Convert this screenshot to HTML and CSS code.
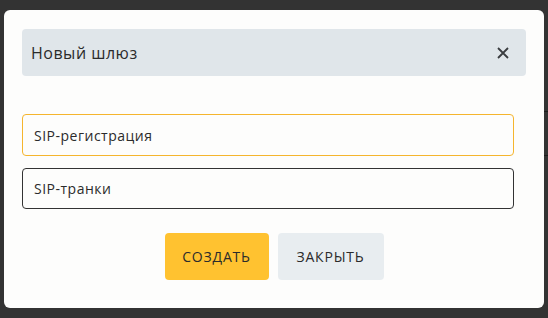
FILE: index.html
```html
<!DOCTYPE html>
<html lang="ru">
<head>
<meta charset="utf-8">
<link rel="stylesheet" href="styles.css">
</head>
<body>
<div class="modal">
  <div class="modal-header">
    <span class="title">Новый шлюз</span>
    <button class="close" aria-label="Закрыть">
      <svg width="12" height="12" viewBox="0 0 12 12"><path d="M1 1L11 11M11 1L1 11" stroke="#3a3d40" stroke-width="1.8" stroke-linecap="butt"/></svg>
    </button>
  </div>
  <div class="fields">
    <div class="field field-active">SIP-регистрация</div>
    <div class="field">SIP-транки</div>
  </div>
  <div class="actions">
    <button class="btn btn-primary">Создать</button>
    <button class="btn btn-secondary">Закрыть</button>
  </div>
</div>
</body>
</html>
```
FILE: styles.css
```css
html, body {
  margin: 0;
  padding: 0;
}
body {
  background-color: #333333;
  background-image: linear-gradient(#1c1c1c, #1c1c1c), linear-gradient(#1c1c1c, #1c1c1c);
  background-repeat: no-repeat;
  background-size: 20px 1px, 20px 1px;
  background-position: right 0 top 111px, right 0 top 155px;
  width: 548px;
  height: 318px;
  overflow: hidden;
  font-family: "Open Sans", "DejaVu Sans", sans-serif;
  color: #2b2b2b;
}
.modal {
  margin: 10px 0 0 4px;
  width: 540px;
  height: 298px;
  box-sizing: border-box;
  background: #fdfdfc;
  border-radius: 6px;
  padding: 19px 18px 28px 18px;
  display: flex;
  flex-direction: column;
}
.modal-header {
  height: 47px;
  background: #e0e6ea;
  border-radius: 4px;
  display: flex;
  align-items: center;
  justify-content: space-between;
  padding: 0 17px 0 9px;
}
.title {
  font-size: 16px;
  letter-spacing: 0.5px;
  color: #2b2b2b;
}
.close {
  border: 0;
  background: transparent;
  padding: 0;
  width: 12px;
  height: 12px;
  display: flex;
}
.fields {
  margin-top: 38px;
  margin-right: 12px;
  display: flex;
  flex-direction: column;
  gap: 12px;
}
.field {
  height: 41px;
  box-sizing: border-box;
  border: 1px solid #333333;
  border-radius: 4px;
  display: flex;
  align-items: center;
  padding-left: 11px;
  font-size: 14px;
  letter-spacing: 0.5px;
  color: #2b2b2b;
}
.field-active {
  height: 42px;
  border-color: #f5b52e;
}
.actions {
  margin-top: 24px;
  display: flex;
  justify-content: center;
  gap: 9px;
}
.btn {
  height: 47px;
  border: 0;
  border-radius: 4px;
  font-family: inherit;
  font-size: 14px;
  letter-spacing: 0.8px;
  text-transform: uppercase;
  color: #2b2b2b;
  padding: 0;
}
.btn-primary {
  width: 104px;
  background: #ffc230;
}
.btn-secondary {
  width: 106px;
  background: #e8edf0;
}
```
